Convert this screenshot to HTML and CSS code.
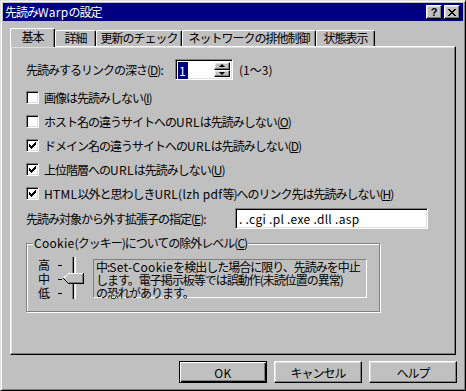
FILE: index.html
```html
<!DOCTYPE html>
<html lang="ja">
<head>
<meta charset="utf-8">
<link rel="stylesheet" href="styles.css">
</head>
<body>
<div class="win">
  <div class="titlebar">
    <span class="title">先読み<span class="lt">Warp</span>の設定</span>
    <div class="tbtns">
      <span class="tbtn help">?</span>
      <span class="tbtn close">
        <svg width="8" height="7" viewBox="0 0 8 7" shape-rendering="crispEdges"><path d="M0 0h2v1h-2z M6 0h2v1h-2z M1 1h2v1h-2z M5 1h2v1h-2z M2 2h4v1h-4z M3 3h2v1h-2z M2 4h4v1h-4z M1 5h2v1h-2z M5 5h2v1h-2z M0 6h2v1h-2z M6 6h2v1h-2z" fill="#000"/></svg>
      </span>
    </div>
  </div>

  <div class="tabs">
    <div class="tab sel w1">基本</div>
    <div class="tab w2">詳細</div>
    <div class="tab w3">更新のチェック</div>
    <div class="tab w4">ネットワークの排他制御</div>
    <div class="tab w5">状態表示</div>
  </div>

  <div class="panel">
    <div class="row depth">
      <span class="lbl-depth">先読みするリンクの深さ(<u>D</u>):</span>
      <div class="spin sunken">
        <div class="spin-field"><span class="selected">1</span></div>
        <div class="spin-btns">
          <div class="sbtn raised"><span class="tri-up"></span></div>
          <div class="sbtn raised"><span class="tri-down"></span></div>
        </div>
      </div>
      <span class="range">(1〜3)</span>
    </div>

    <div class="checks">
      <div class="cbrow"><span class="cb sunken"></span><span>画像は先読みしない(<u>I</u>)</span></div>
      <div class="cbrow"><span class="cb sunken"></span><span>ホスト名の違うサイトへの<span class="lt">URL</span>は先読みしない(<u>O</u>)</span></div>
      <div class="cbrow"><span class="cb sunken"><svg width="9" height="9" viewBox="0 0 9 9" shape-rendering="crispEdges"><path d="M7 1h1v1h-1z M6 2h2v1h-2z M1 3h1v1h-1z M5 3h3v1h-3z M1 4h2v1h-2z M4 4h3v1h-3z M1 5h5v1h-5z M2 6h3v1h-3z M3 7h1v1h-1z" fill="#000"/></svg></span><span>ドメイン名の違うサイトへの<span class="lt">URL</span>は先読みしない(<u>D</u>)</span></div>
      <div class="cbrow"><span class="cb sunken"><svg width="9" height="9" viewBox="0 0 9 9" shape-rendering="crispEdges"><path d="M7 1h1v1h-1z M6 2h2v1h-2z M1 3h1v1h-1z M5 3h3v1h-3z M1 4h2v1h-2z M4 4h3v1h-3z M1 5h5v1h-5z M2 6h3v1h-3z M3 7h1v1h-1z" fill="#000"/></svg></span><span>上位階層への<span class="lt">URL</span>は先読みしない(<u>U</u>)</span></div>
      <div class="cbrow"><span class="cb sunken"><svg width="9" height="9" viewBox="0 0 9 9" shape-rendering="crispEdges"><path d="M7 1h1v1h-1z M6 2h2v1h-2z M1 3h1v1h-1z M5 3h3v1h-3z M1 4h2v1h-2z M4 4h3v1h-3z M1 5h5v1h-5z M2 6h3v1h-3z M3 7h1v1h-1z" fill="#000"/></svg></span><span><span class="lt">HTML</span>以外と思わしき<span class="lt">URL(lzh pdf</span>等)へのリンク先は先読みしない(<u>H</u>)</span></div>
    </div>

    <div class="row ext">
      <span class="lbl-ext">先読み対象から外す拡張子の指定(<u>E</u>):</span>
      <div class="textbox sunken">. .cgi .pl .exe .dll .asp</div>
    </div>

    <div class="group">
      <span class="legend"><span class="lt">Cookie</span>(クッキー)についての除外レベル(<u>C</u>)</span>
      <div class="group-body">
        <div class="levels"><span>高</span><span>中</span><span>低</span></div>
        <svg class="slider" width="26" height="42" viewBox="0 0 26 42" shape-rendering="crispEdges">
          <rect x="0" y="8" width="4" height="1" fill="#000"/>
          <rect x="0" y="22" width="4" height="1" fill="#000"/>
          <rect x="0" y="36" width="4" height="1" fill="#000"/>
          <rect x="14" y="0" width="1" height="42" fill="#808080"/>
          <rect x="15" y="0" width="1" height="42" fill="#000"/>
          <rect x="16" y="0" width="1" height="42" fill="#dfdfdf"/>
          <rect x="17" y="0" width="1" height="42" fill="#fff"/>
          <polygon points="5,21 10,16 25,16 25,26 10,26" fill="#c0c0c0"/>
          <polyline points="5.5,21 10.5,16.5 24.5,16.5" fill="none" stroke="#fff" stroke-width="1"/>
          <polyline points="5.5,21.5 10.5,26.5 25.5,26.5 25.5,16" fill="none" stroke="#000" stroke-width="1"/>
          <polyline points="11,25.5 24.5,25.5 24.5,17" fill="none" stroke="#808080" stroke-width="1"/>
        </svg>
        <div class="desc">中:<span class="lt">Set-Cookie</span>を検出した場合に限り、先読みを中止<br>します。電子掲示板等では誤動作(未読位置の異常)<br>の恐れがあります。</div>
      </div>
    </div>
  </div>

  <div class="buttons">
    <button class="btn default"><span class="lt">OK</span></button>
    <button class="btn">キャンセル</button>
    <button class="btn">ヘルプ</button>
  </div>
</div>
</body>
</html>
```

FILE: styles.css
```css
* { box-sizing: border-box; }

body {
  margin: 0;
  background: #c0c0c0;
  font-family: "Noto Sans CJK JP", "Liberation Sans", sans-serif;
  font-size: 12px;
  letter-spacing: -1px;
  color: #000;
}

.lt { letter-spacing: 0.3px; }

u { text-decoration: underline; text-underline-offset: 1px; }

.sunken {
  border: 1px solid;
  border-color: #808080 #fff #fff #808080;
  box-shadow: inset 1px 1px #000, inset -1px -1px #dfdfdf;
}

.raised {
  border: 1px solid;
  border-color: #fff #000 #000 #fff;
  box-shadow: inset -1px -1px #808080, inset 1px 1px #dfdfdf;
}

.win {
  width: 466px;
  height: 391px;
  border: 1px solid;
  border-color: #dfdfdf #000 #000 #dfdfdf;
  box-shadow: inset 1px 1px #fff, inset -1px -1px #808080;
  padding: 2px;
  display: flex;
  flex-direction: column;
}

.titlebar {
  height: 18px;
  background: #000080;
  display: flex;
  align-items: center;
  justify-content: space-between;
  padding: 0 3px 0 2px;
  flex-shrink: 0;
}

.title {
  color: #fff;
  line-height: 16px;
}

.tbtns {
  display: flex;
  gap: 2px;
}

.tbtn {
  width: 16px;
  height: 14px;
  background: #c0c0c0;
  border: 1px solid;
  border-color: #fff #000 #000 #fff;
  box-shadow: inset -1px -1px #808080, inset 1px 1px #dfdfdf;
  display: flex;
  align-items: center;
  justify-content: center;
}

.help {
  font-family: "Liberation Sans", sans-serif;
  font-weight: bold;
  font-size: 11px;
  letter-spacing: 0;
  line-height: 12px;
}

.tabs {
  margin: 7px 7px 0 7px;
  height: 18px;
  display: flex;
  align-items: flex-end;
  flex-shrink: 0;
}

.tab {
  height: 16px;
  border-top: 1px solid #fff;
  border-left: 1px solid #fff;
  border-right: 1px solid #000;
  box-shadow: inset -1px 0 #808080;
  border-radius: 2px 2px 0 0;
  background: #c0c0c0;
  text-align: center;
  line-height: 14px;
  white-space: nowrap;
}

.tab.sel {
  height: 19px;
  margin-bottom: -1px;
  line-height: 16px;
  position: relative;
  z-index: 2;
}

.w1 { width: 45px; }
.w2 { width: 41px; }
.w3 { width: 86px; }
.w4 { width: 134px; }
.w5 { width: 59px; }

.panel {
  margin: 0 7px;
  height: 309px;
  flex-shrink: 0;
  border: 1px solid;
  border-color: #fff #000 #000 #fff;
  box-shadow: inset -1px -1px #808080, inset 1px 1px #dfdfdf;
  padding: 12px 0 0 15px;
  position: relative;
  z-index: 1;
}

.row {
  display: flex;
  align-items: center;
  height: 21px;
  white-space: nowrap;
}

.lbl-depth { width: 149px; }

.spin {
  width: 58px;
  height: 21px;
  display: flex;
  background: #fff;
  padding: 2px;
}

.spin-field {
  flex: 1;
  line-height: 17px;
}

.selected {
  background: #000080;
  color: #fff;
  padding: 0 2px 0 1px;
  letter-spacing: 0;
}

.spin-btns {
  width: 16px;
  display: flex;
  flex-direction: column;
  background: #c0c0c0;
}

.sbtn {
  flex: 1;
  display: flex;
  align-items: center;
  justify-content: center;
}

.tri-up {
  width: 0; height: 0;
  border-left: 3px solid transparent;
  border-right: 3px solid transparent;
  border-bottom: 3px solid #000;
}

.tri-down {
  width: 0; height: 0;
  border-left: 3px solid transparent;
  border-right: 3px solid transparent;
  border-top: 3px solid #000;
}

.range { margin-left: 6px; letter-spacing: 0; }

.checks {
  margin-top: 5px;
  display: flex;
  flex-direction: column;
}

.cbrow {
  height: 24px;
  display: flex;
  align-items: center;
  gap: 5px;
  white-space: nowrap;
}

.cb {
  width: 13px;
  height: 13px;
  background: #fff;
  display: flex;
  align-items: center;
  justify-content: center;
  flex-shrink: 0;
  padding: 1px;
}

.cb svg { display: block; }

.ext { margin-top: 3px; }

.lbl-ext { width: 209px; }

.textbox {
  width: 193px;
  height: 21px;
  background: #fff;
  padding: 0 3px;
  line-height: 19px;
  letter-spacing: 0.3px;
}

.group {
  margin-top: 14px;
  width: 354px;
  height: 69px;
  border: 1px solid #808080;
  box-shadow: 1px 1px 0 #fff, inset 1px 1px 0 #fff;
  position: relative;
  padding: 14px 0 0 11px;
}

.legend {
  position: absolute;
  top: -8px;
  left: 6px;
  background: #c0c0c0;
  padding: 0 1px;
  line-height: 14px;
  white-space: nowrap;
}

.group-body {
  display: flex;
  align-items: flex-start;
}

.levels {
  display: flex;
  flex-direction: column;
  width: 12px;
  line-height: 14px;
}

.slider {
  display: block;
  margin: -1px 0 0 8px;
}

.desc {
  margin: 1px 0 0 9px;
  width: 274px;
  height: 39px;
  border: 1px solid;
  border-color: #808080 #fff #fff #808080;
  padding: 0 2px;
  line-height: 13px;
  white-space: nowrap;
}

.buttons {
  margin-top: 6px;
  height: 22px;
  display: flex;
  justify-content: flex-end;
  gap: 7px;
  padding-right: 6px;
  flex-shrink: 0;
}

.btn {
  width: 88px;
  height: 22px;
  background: #c0c0c0;
  border: 1px solid;
  border-color: #fff #000 #000 #fff;
  box-shadow: inset -1px -1px #808080, inset 1px 1px #dfdfdf;
  font: inherit;
  letter-spacing: -1px;
  color: #000;
  padding: 0;
}

.btn.default {
  border: 1px solid #000;
  box-shadow: inset 1px 1px #fff, inset -1px -1px #000, inset -2px -2px #808080;
}
```
